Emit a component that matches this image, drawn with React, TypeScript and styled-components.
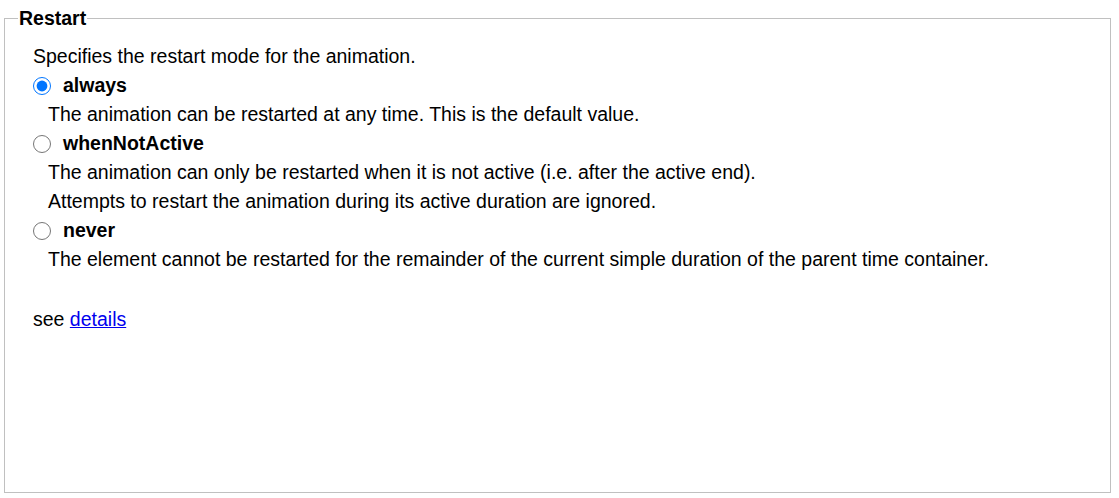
import React from "react";
import styled, { createGlobalStyle } from "styled-components";

const Global = createGlobalStyle`
  html, body { margin: 0; padding: 0; background: #fff; }
  body { font-family: "Liberation Sans", Arial, sans-serif; color: #000; }
`;

const Fieldset = styled.fieldset`
  box-sizing: border-box;
  margin: 7px 8px 0 4px;
  height: 486px;
  border: 1px solid #c0c0c0;
  padding: 0 13px 0 13px;
  min-width: 0;
`;

const Legend = styled.legend`
  font-size: 19.5px;
  font-weight: bold;
  padding: 0 1px;
  line-height: 22px;
`;

const Body = styled.div`
  padding: 13px 0 0 15px;
  font-size: 19.5px;
  line-height: 29px;
`;

const Line = styled.div<{ $indent?: number }>`
  padding-left: ${(p) => p.$indent ?? 0}px;
  white-space: nowrap;
`;

const OptionRow = styled.label`
  display: flex;
  align-items: center;
  height: 29px;
  font-weight: bold;
  gap: 12px;
`;

const Radio = styled.input`
  width: 18px;
  height: 18px;
  margin: 0;
  accent-color: #0075ff;
`;

const SeeLine = styled.div`
  margin-top: 31px;
`;

const Link = styled.a`
  color: #0000ee;
  text-decoration: underline;
`;

const options = [
  {
    name: "always",
    lines: ["The animation can be restarted at any time. This is the default value."],
  },
  {
    name: "whenNotActive",
    lines: [
      "The animation can only be restarted when it is not active (i.e. after the active end).",
      "Attempts to restart the animation during its active duration are ignored.",
    ],
  },
  {
    name: "never",
    lines: [
      "The element cannot be restarted for the remainder of the current simple duration of the parent time container.",
    ],
  },
];

export default function App() {
  const [value, setValue] = React.useState("always");
  return (
    <>
      <Global />
      <Fieldset>
        <Legend>Restart</Legend>
        <Body>
          <Line>Specifies the restart mode for the animation.</Line>
          {options.map((o) => (
            <div key={o.name}>
              <OptionRow>
                <Radio
                  type="radio"
                  name="restart"
                  checked={value === o.name}
                  onChange={() => setValue(o.name)}
                />
                {o.name}
              </OptionRow>
              {o.lines.map((l) => (
                <Line key={l} $indent={15}>
                  {l}
                </Line>
              ))}
            </div>
          ))}
          <SeeLine>
            see <Link href="#">details</Link>
          </SeeLine>
        </Body>
      </Fieldset>
    </>
  );
}
